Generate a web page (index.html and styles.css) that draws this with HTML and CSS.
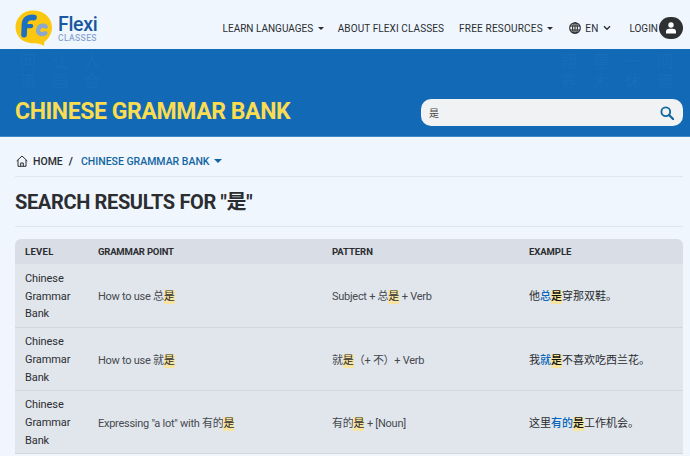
FILE: index.html
```html
<!DOCTYPE html>
<html lang="en">
<head>
<meta charset="utf-8">
<title>Chinese Grammar Bank</title>
<link rel="stylesheet" href="styles.css">
</head>
<body>
<header class="topbar">
  <a class="logo">
    <svg class="logo-mark" width="38" height="36" viewBox="0 0 40 38">
      <path d="M19 .5C8 .5 .5 8.500 .5 18S8 35 18 35c5 0 9 .5 12.500 2.700l.5-4.200c5-3.500 8-9 8-15C39 8.500 31 .5 19 .5z" fill="#fcc80f"/>
      <path d="M20 8c-6-.8-9.500 1.500-10 6.500L9.500 26" fill="none" stroke="#1d6fc0" stroke-width="6" stroke-linecap="round"/>
      <path d="M10 17h7" fill="none" stroke="#1d6fc0" stroke-width="4.500" stroke-linecap="round"/>
      <path d="M32.500 17.500c-2.500-2-7-1-8 3s3 6.500 7.500 4" fill="none" stroke="#8ba6cf" stroke-width="4.500" stroke-linecap="round"/>
    </svg>
    <span class="logo-text"><b>Flexi</b><small>CLASSES</small></span>
  </a>
  <nav class="nav">
    <a class="nav-item learn">LEARN LANGUAGES <i class="caret"></i></a>
    <a class="nav-item about">ABOUT FLEXI CLASSES</a>
    <a class="nav-item free">FREE RESOURCES <i class="caret"></i></a>
    <a class="nav-item lang">
      <svg width="12" height="12" viewBox="0 0 12 12" fill="none" stroke="#2b2b2b" stroke-width="1.100"><circle cx="6" cy="6" r="5.300"/><ellipse cx="6" cy="6" rx="2.400" ry="5.300"/><path d="M.7 4h10.600M.7 8h10.600M6 .7v10.600"/></svg>
      <span class="lang-code">EN</span>
      <svg width="8" height="6" viewBox="0 0 8 6" fill="none" stroke="#2b2b2b" stroke-width="1.300"><path d="M1 1.300l3 3 3-3"/></svg>
    </a>
    <a class="nav-item login">LOGIN
      <span class="avatar">
        <svg width="12" height="12" viewBox="0 0 12 12" fill="#fff"><circle cx="6" cy="3" r="2.700"/><path d="M1 11.500V9.500C1 7.800 2.300 6.800 4 6.800h4c1.700 0 3 1 3 2.700v2z"/></svg>
      </span>
    </a>
  </nav>
</header>

<section class="hero">
  <div class="hero-glyphs left" aria-hidden="true"><span>问道</span><span>让国</span><span>人会</span></div>
  <div class="hero-glyphs right" aria-hidden="true"><span>翔养</span><span>葶木</span><span>一休</span><span>问道</span></div>
  <h1 class="hero-title">CHINESE GRAMMAR BANK</h1>
  <form class="search">
    <span class="search-text">是</span>
    <svg width="14" height="14" viewBox="0 0 15 15" fill="none" stroke="#12659f" stroke-width="2"><circle cx="6.200" cy="6.200" r="4.700"/><path d="M9.700 9.700l4.300 4.300" stroke-linecap="round" stroke-width="2.400"/></svg>
  </form>
</section>

<main class="content">
  <div class="crumbs">
    <svg width="12" height="12" viewBox="0 0 12 12" fill="none" stroke="#2b2b2b" stroke-width="1"><path d="M.7 6L6 1l5.300 5M2 5v6.300h8V5"/><path d="M4.700 11.300V8h2.600v3.300"/></svg>
    <span class="crumb-home">HOME</span>
    <span class="crumb-sep">/</span>
    <span class="crumb-current">CHINESE GRAMMAR BANK</span>
    <i class="caret blue"></i>
  </div>
  <h2 class="results-title">SEARCH RESULTS FOR "是"</h2>
  <table class="results">
    <thead>
      <tr><th class="c1">LEVEL</th><th class="c2">GRAMMAR POINT</th><th class="c3">PATTERN</th><th class="c4">EXAMPLE</th></tr>
    </thead>
    <tbody>
      <tr>
        <td class="level">Chinese Grammar Bank</td>
        <td>How to use 总<mark>是</mark></td>
        <td>Subject + 总<mark>是</mark> + Verb</td>
        <td class="ex">他<em>总</em><mark>是</mark>穿那双鞋。</td>
      </tr>
      <tr>
        <td class="level">Chinese Grammar Bank</td>
        <td>How to use 就<mark>是</mark></td>
        <td>就<mark>是</mark>（+ 不）+ Verb</td>
        <td class="ex">我<em>就</em><mark>是</mark>不喜欢吃西兰花。</td>
      </tr>
      <tr>
        <td class="level">Chinese Grammar Bank</td>
        <td>Expressing "a lot" with 有的<mark>是</mark></td>
        <td>有的<mark>是</mark> + [Noun]</td>
        <td class="ex">这里<em>有的</em><mark>是</mark>工作机会。</td>
      </tr>
    </tbody>
  </table>
</main>
</body>
</html>
```
FILE: styles.css
```css
* { box-sizing: border-box; }
html, body { margin: 0; height: 456px; overflow: hidden; }
body {
  background: #eff6fe;
  color: #2b2d30;
  font-family: "Roboto", "Noto Sans CJK SC", sans-serif;
}
.topbar {
  height: 49px;
  display: flex;
  align-items: center;
  justify-content: space-between;
  padding: 7px 7px 0 15px;
}
.logo { display: flex; align-items: center; gap: 5px; }
.logo-text { display: flex; flex-direction: column; }
.logo-text b { font-size: 19.500px; line-height: 20px; font-weight: 500; letter-spacing: -.3px; color: #17589f; }
.logo-text small { margin-top: -1px; font-size: 8.500px; line-height: 8px; letter-spacing: .4px; color: #8ba6cf; font-weight: 500; }
.nav { display: flex; align-items: center; }
.nav-item {
  display: flex;
  align-items: center;
  gap: 4.500px;
  font-size: 10px;
  letter-spacing: .1px;
  color: #2b2d30;
  white-space: nowrap;
}
.learn { letter-spacing: 0; }
.about { margin-left: 14px; }
.free { margin-left: 15px; letter-spacing: .2px; }
.caret {
  display: inline-block;
  width: 0; height: 0;
  border-left: 3px solid transparent;
  border-right: 3px solid transparent;
  border-top: 3px solid currentColor;
}
.lang { gap: 4px; margin-left: 16px; }
.lang-code { margin-right: 1px; }
.login { gap: 1px; margin-left: 18px; letter-spacing: 0; }
.avatar {
  width: 24px; height: 22px;
  border-radius: 11px;
  background: #2f3032;
  display: flex;
  align-items: center;
  justify-content: center;
}
.hero {
  position: relative;
  height: 88px;
  background: #126ab6;
  border-bottom: 1px solid #3f88c8;
  display: flex;
  align-items: flex-end;
  justify-content: space-between;
  padding: 0 7px 9px 15px;
  overflow: hidden;
}
.hero-glyphs {
  position: absolute;
  top: 3px;
  display: flex;
  gap: 16px;
  font-size: 16px;
  line-height: 20px;
  color: #fff;
  opacity: .02;
}
.hero-glyphs span { width: 16px; display: block; }
.hero-glyphs.left { left: 20px; }
.hero-glyphs.right { right: 17px; }
.hero-title {
  position: relative;
  margin: 0;
  font-size: 23px;
  line-height: 30px;
  font-weight: 700;
  letter-spacing: -.4px;
  color: #fadc50;
}
.search {
  position: relative;
  width: 262px;
  height: 27px;
  margin: 0 0 1px;
  border-radius: 10px;
  background: #f1f2f4;
  display: flex;
  align-items: center;
  justify-content: space-between;
  padding: 0 9px 0 8px;
}
.search-text { font-size: 10px; color: #444; }
.content { padding: 0 7px 0 15px; }
.crumbs {
  height: 40px;
  display: flex;
  align-items: center;
  gap: 5px;
  padding: 9px 0 0 1px;
  border-bottom: 1px solid #dfe6ee;
}
.crumb-home { font-size: 10.500px; font-weight: 500; color: #2b2d30; }
.crumb-sep { font-size: 11px; font-weight: 700; margin: 0 3px 0 1px; }
.crumb-current { font-size: 10.500px; font-weight: 500; color: #12659f; }
.caret.blue {
  color: #12659f;
  border-left-width: 4px;
  border-right-width: 4px;
  border-top-width: 4px;
  margin-left: -1px;
}
.results-title {
  margin: 0 0 12px;
  height: 50px;
  border-bottom: 1px solid #dfe6ee;
  font-size: 20px;
  line-height: 50px;
  font-weight: 700;
  letter-spacing: -.35px;
  color: #2b2d30;
}
.results {
  width: 668px;
  table-layout: fixed;
  border-collapse: separate;
  border-spacing: 0;
  font-size: 11px;
}
.results th {
  height: 25px;
  padding: 0 10px;
  background: #d9dee6;
  text-align: left;
  font-size: 9.500px;
  font-weight: 700;
  letter-spacing: -.05px;
  color: #2b2d30;
}
.results th.c1 { width: 73px; border-top-left-radius: 6px; letter-spacing: .3px; }
.results th.c2 { width: 234px; letter-spacing: -.2px; }
.results th.c3 { width: 197px; }
.results th.c4 { border-top-right-radius: 6px; }
.results td {
  height: 63px;
  padding: 0 10px;
  background: #e1e6ed;
  border-bottom: 1px solid #d2d8e0;
  color: #46494e;
  letter-spacing: -.27px;
  vertical-align: middle;
}
.results tbody tr:first-child td { height: 64px; }
.results td.level { padding-top: 2px; line-height: 17.700px; color: #2b2d30; letter-spacing: -.1px; }
.results td.ex { color: #2b2d30; letter-spacing: 0; }
mark {
  display: inline-block;
  height: 14px;
  line-height: 14px;
  background: #f6e4a0;
  color: #2b2d30;
  letter-spacing: 0;
}
td.ex mark { color: #111; font-weight: 500; }
em { font-style: normal; font-weight: 500; color: #0a66b8; }
```
